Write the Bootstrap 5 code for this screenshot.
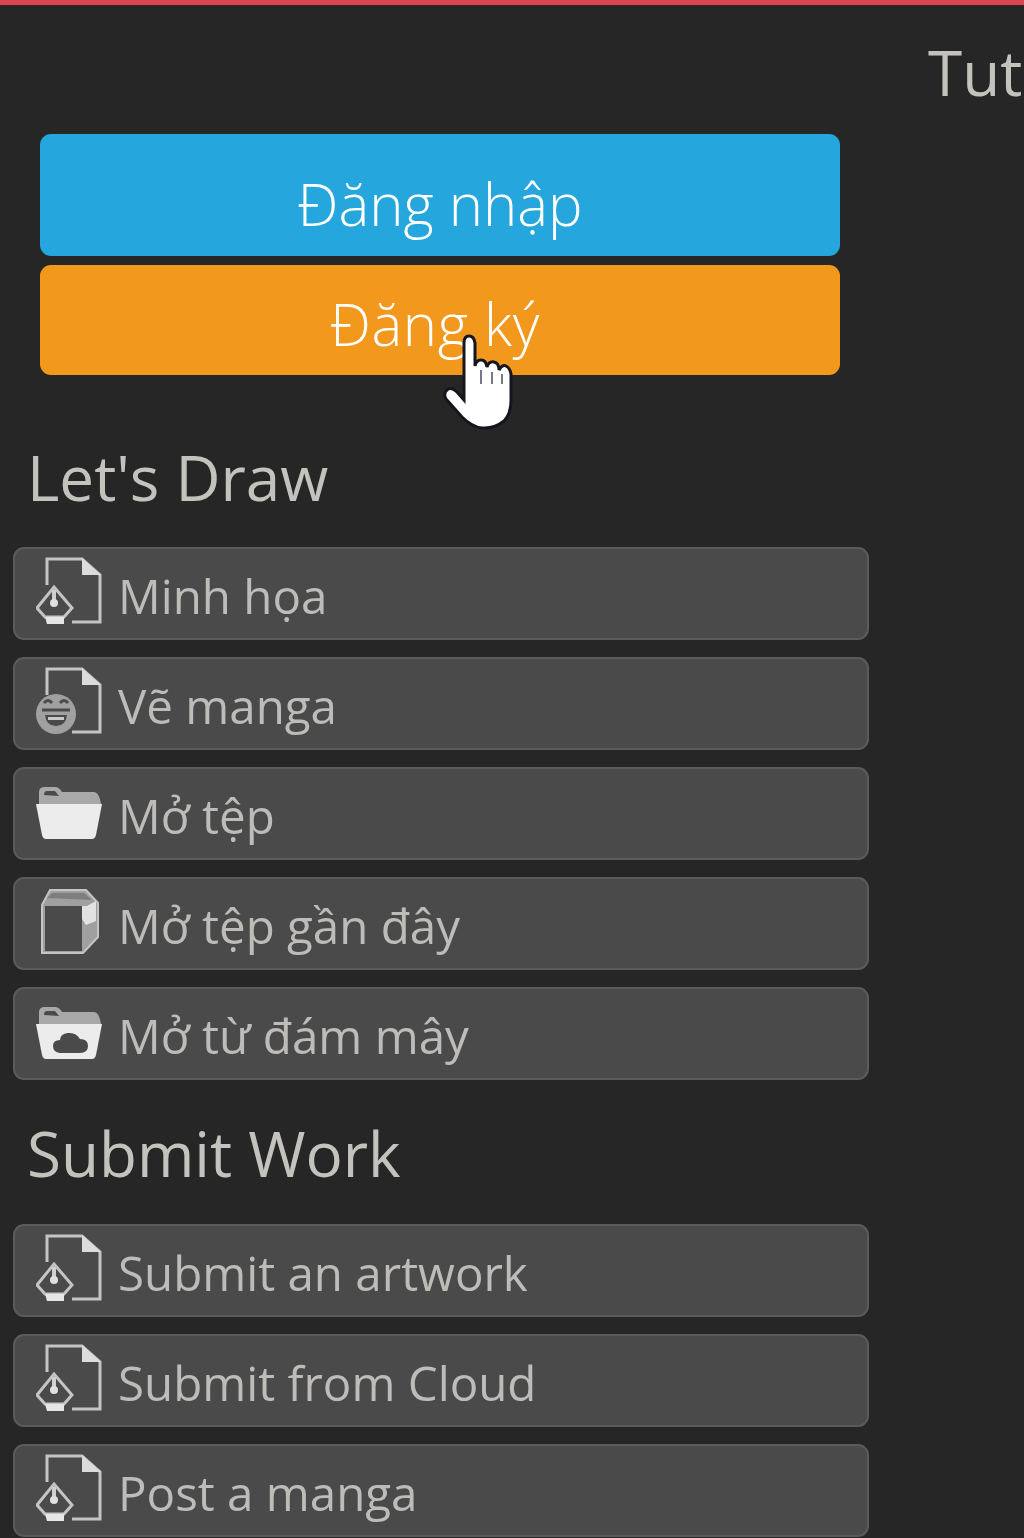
<!DOCTYPE html>
<html lang="vi">
<head>
<meta charset="utf-8">
<title>Sidebar</title>
<link href="https://cdn.jsdelivr.net/npm/bootstrap@5.3.0/dist/css/bootstrap.min.css" rel="stylesheet">
<style>
html,body{height:1538px;overflow:hidden}
body{background:#262626;font-family:"Open Sans","Liberation Sans",sans-serif;color:#c2c0bc;filter:blur(.6px)}
.topline{height:5px;background:#dc4552;box-shadow:0 1px 1px #3a2325}
.side{width:882px;flex:none;padding:0 0 0 13px}
.auth{padding:129px 0 0 27px;width:855px}
.auth-btn{display:block;width:800px;border:0;border-radius:11px;color:#fff;font-size:58px;font-weight:300;line-height:1;padding:0;text-align:center}
.auth-blue{background:#25a6dc;height:122px;margin-bottom:9px;padding-top:18px}
.auth-orange{background:#f2981d;height:110px;padding:8px 10px 0 0;letter-spacing:.6px}
.sec-title{font-size:62px;font-weight:400;line-height:1;margin:0;padding-left:14px;color:#c4c2bd}
.sec-a{padding-top:71px;padding-bottom:39px}
.sec-b{padding-top:42px;padding-bottom:40px}
.tool-list{gap:17px;width:856px}
.tool{height:93px;background:#4a4a4a;border:2px solid #5b5b5b;border-radius:11px;color:#bdbcb9;font-size:47.5px;line-height:1;padding:0 0 0 21px;gap:16px;text-decoration:none;white-space:nowrap}
.tool-i{width:66px;height:72px;flex:none;margin-bottom:7px}
.tool-t{padding-top:4px}
.main-col{padding:36px 0 0 46px;white-space:nowrap}
.main-h{font-size:62px;font-weight:400;line-height:1;margin:0;color:#c4c2bd}
.hand{position:absolute;left:438px;top:330px;width:82px;height:104px}
</style>
</head>
<body class="position-relative">
<svg width="0" height="0" class="position-absolute">
<defs>
<g id="pg" fill="none" stroke="#c4c4c4" stroke-width="3">
<path d="M11 31V5H46L64 21V68H36"/>
<path d="M46 4L65 21H46Z" fill="#dcdcdc" stroke="none"/>
</g>
<g id="nib">
<path d="M18 33L36 54L28 63H9L1 54Z" fill="#4a4a4a" stroke="#c4c4c4" stroke-width="3"/>
<path d="M18 36L18 46" stroke="#d0d0d0" stroke-width="4"/>
<circle cx="18" cy="49" r="4" fill="#e0e0e0"/>
<path d="M9 63H28V70H11Z" fill="#e6e6e6"/>
</g>
</defs>
</svg>
<div class="topline"></div>
<div class="d-flex">
<aside class="side">
<div class="auth">
<button class="auth-btn auth-blue" type="button">Đăng nhập</button>
<button class="auth-btn auth-orange" type="button">Đăng ký</button>
</div>
<h5 class="sec-title sec-a">Let's Draw</h5>
<div class="tool-list d-flex flex-column">
<a class="tool d-flex align-items-center" href="#"><svg class="tool-i" viewBox="0 0 66 72"><use href="#pg"/><use href="#nib"/></svg><span class="tool-t">Minh họa</span></a>
<a class="tool d-flex align-items-center" href="#"><svg class="tool-i" viewBox="0 0 66 72"><use href="#pg"/><circle cx="20" cy="50" r="20" fill="#a0a0a0"/><path d="M6 46H34" stroke="#4a4a4a" stroke-width="3"/><path d="M8 39q4-5 8 0M24 39q4-5 8 0" fill="none" stroke="#4a4a4a" stroke-width="3"/><path d="M9 51H31Q30 62 20 62T9 51Z" fill="#4a4a4a"/><path d="M12 53H28V56H12Z" fill="#c8c8c8"/></svg><span class="tool-t">Vẽ manga</span></a>
<a class="tool d-flex align-items-center" href="#"><svg class="tool-i" viewBox="0 0 66 72"><g transform="translate(0 2)"><path d="M3 28V16Q3 11 9 11H19Q23 11 26 16H58Q63 16 65 28Z" fill="#a8a8a8"/><path d="M8 19Q8 15 11 15H19L23 20Z" fill="#4a4a4a"/><path d="M0 28H66L60 59Q59 63 56 63H10Q7 63 6 59Z" fill="#ececec"/></g></svg><span class="tool-t">Mở tệp</span></a>
<a class="tool d-flex align-items-center" href="#"><svg class="tool-i" viewBox="0 0 66 72"><g transform="translate(0 1)"><path d="M6 20L14 5H50L62 18V52L47 68H6Z" fill="#a0a0a0" stroke="#c4c4c4" stroke-width="2"/><rect x="9" y="21" width="37" height="45" fill="#4a4a4a"/><path d="M46 21H51L60 16V36L50 40L46 34Z" fill="#e2e2e2"/><path d="M11 13L16 8H48L56 15Z" fill="#7e7e7e"/></g></svg><span class="tool-t">Mở tệp gần đây</span></a>
<a class="tool d-flex align-items-center" href="#"><svg class="tool-i" viewBox="0 0 66 72"><g transform="translate(0 2)"><path d="M3 28V16Q3 11 9 11H19Q23 11 26 16H58Q63 16 65 28Z" fill="#a8a8a8"/><path d="M8 19Q8 15 11 15H19L23 20Z" fill="#4a4a4a"/><path d="M0 28H66L60 59Q59 63 56 63H10Q7 63 6 59Z" fill="#ececec"/><path d="M24 57H44Q52 57 52 50T44 43Q40 36 32 37T24 44Q17 44 17 50T24 57Z" fill="#4a4a4a"/></g></svg><span class="tool-t">Mở từ đám mây</span></a>
</div>
<h5 class="sec-title sec-b">Submit Work</h5>
<div class="tool-list d-flex flex-column">
<a class="tool d-flex align-items-center" href="#"><svg class="tool-i" viewBox="0 0 66 72"><use href="#pg"/><use href="#nib"/></svg><span class="tool-t">Submit an artwork</span></a>
<a class="tool d-flex align-items-center" href="#"><svg class="tool-i" viewBox="0 0 66 72"><use href="#pg"/><use href="#nib"/></svg><span class="tool-t">Submit from Cloud</span></a>
<a class="tool d-flex align-items-center" href="#"><svg class="tool-i" viewBox="0 0 66 72"><use href="#pg"/><use href="#nib"/></svg><span class="tool-t">Post a manga</span></a>
</div>
</aside>
<main class="main-col"><h5 class="main-h">Tutorials</h5></main>
</div>
<svg class="hand" viewBox="0 0 82 104" aria-hidden="true">
<path d="M26 13Q26 6 31 6T37 13V36Q38 30 43 30T49 37Q51 31 56 32T61 40Q64 34 68 36T73 44V70Q73 84 66 91Q56 99 44 98Q34 97 24 87L8 69Q5 64 9 60T19 62L26 70Z" fill="#fff" stroke="#15151f" stroke-width="3"/>
<path d="M43 40V54M54 42V54M64 44V54" stroke="#77778a" stroke-width="2" fill="none"/>
</svg>
</body>
</html>
